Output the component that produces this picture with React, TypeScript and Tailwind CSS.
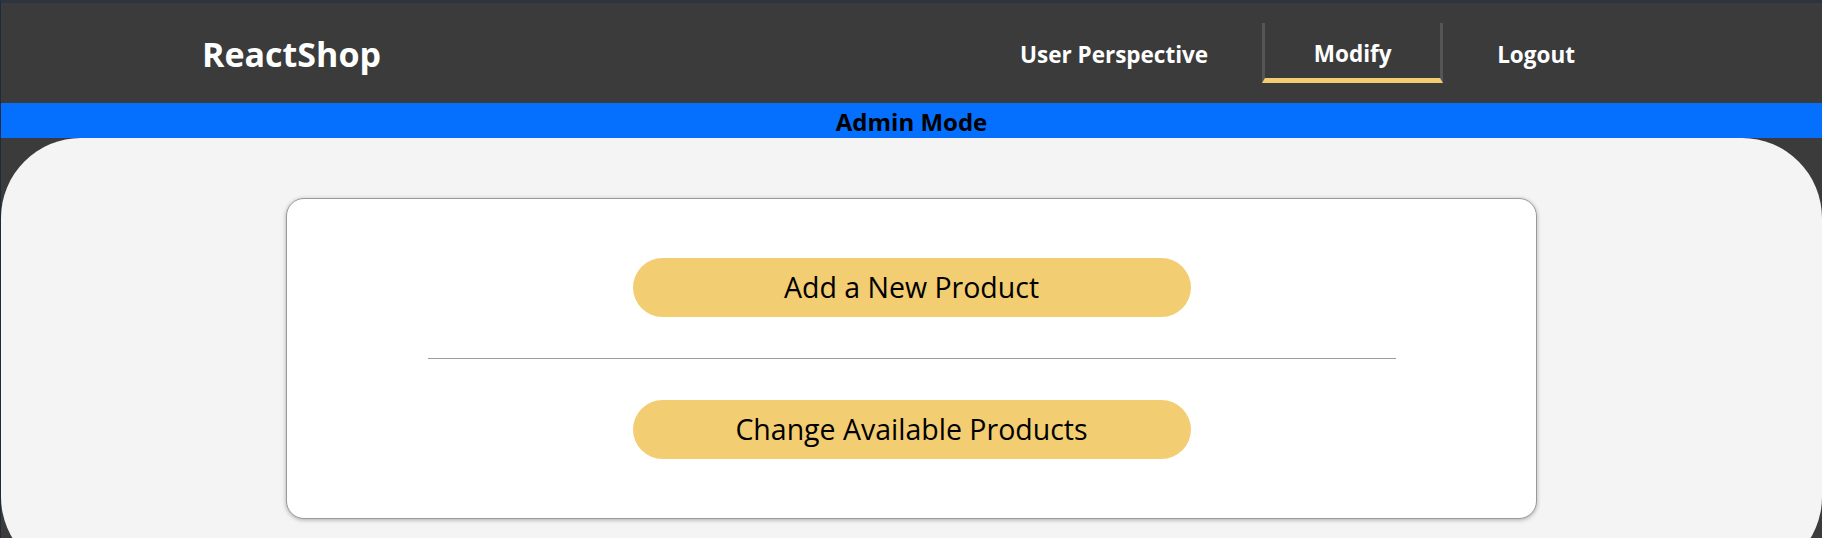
import { useState } from "react";

const navItems = ["User Perspective", "Modify", "Logout"];

export default function App() {
  const [active, setActive] = useState("Modify");

  return (
    <div
      className="min-h-screen border-t-[3px] border-l border-t-[#2d3340] border-l-[#1e2b3d] bg-[#3b3b3b]"
      style={{ fontFamily: '"Open Sans", "Noto Sans", sans-serif' }}
    >
      {/* Header */}
      <header className="flex h-[100px] items-center justify-between pr-[247px] pl-[201px]">
        <h1 className="pt-[2px] text-[34px] font-bold text-white">ReactShop</h1>
        <ul className="flex items-center">
          {navItems.map((item) => {
            const isActive = item === active;
            return (
              <li key={item}>
                <button
                  onClick={() => setActive(item)}
                  className={
                    isActive
                      ? "mx-[54px] flex h-[60px] w-[181px] cursor-pointer items-center justify-center border-x-[3px] border-b-[5px] border-x-[#555555] border-b-[#f3cd71] pt-[6px] text-[22.5px] font-bold text-white"
                      : "flex cursor-pointer items-center pt-[3px] text-[22.5px] font-bold text-white"
                  }
                >
                  {item}
                </button>
              </li>
            );
          })}
        </ul>
      </header>

      {/* Admin banner */}
      <div className="flex h-[35px] items-center justify-center bg-[#0570fe] pt-[2px]">
        <p className="text-[24px] leading-none font-bold text-black">Admin Mode</p>
      </div>

      {/* Main */}
      <main className="rounded-[80px] bg-[#f4f4f4] pt-[60px] pb-[58px]">
        <div className="mx-auto flex w-[1251px] flex-col items-center rounded-[18px] border border-[#9a9a9a] bg-white py-[59px] shadow-[0_1px_4px_rgba(0,0,0,0.3)]">
          <button className="h-[59px] w-[558px] cursor-pointer rounded-full bg-[#f3cd71] text-[28.5px] text-black">
            Add a New Product
          </button>
          <div className="my-[41px] h-px w-[968px] bg-[#9d9d9d]" />
          <button className="h-[59px] w-[558px] cursor-pointer rounded-full bg-[#f3cd71] text-[28.5px] text-black">
            Change Available Products
          </button>
        </div>
      </main>
    </div>
  );
}
